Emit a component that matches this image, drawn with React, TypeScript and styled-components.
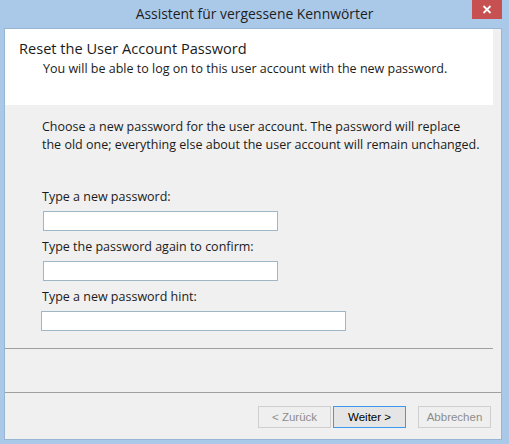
import React from 'react';
import styled, { createGlobalStyle } from 'styled-components';

const GlobalStyle = createGlobalStyle`
    html, body {
        margin: 0;
        padding: 0;
        background: #aac9e9;
    }
    * { box-sizing: border-box; }
`;

const Window = styled.div`
    width: 509px;
    height: 444px;
    background: #aac9e9;
    display: flex;
    flex-direction: column;
    font-family: "Open Sans", "Noto Sans", sans-serif;
    color: #1b1b1b;
`;

const TitleBar = styled.div`
    height: 28px;
    display: grid;
    grid-template-columns: 1fr auto 1fr;
    align-items: start;
`;

const Title = styled.div`
    grid-column: 2;
    font-size: 13.9px;
    line-height: 28px;
    color: #1e1e1e;
`;

const CloseButton = styled.div`
    grid-column: 3;
    justify-self: end;
    margin-right: 7px;
    width: 30px;
    height: 19px;
    background: #c75050;
    display: flex;
    align-items: center;
    justify-content: center;
`;

const Client = styled.div`
    margin: 0 7px 4px 4px;
    height: 412px;
    border: 1px solid #98b5d4;
    background: #f0f0f0;
    display: flex;
    flex-direction: column;
`;

const Header = styled.div`
    height: 76px;
    margin-right: 8px;
    background: #ffffff;
    padding: 9px 0 0 14px;
`;

const HeaderTitle = styled.div`
    font-size: 14.6px;
    line-height: 20px;
`;

const HeaderSub = styled.div`
    font-size: 12.5px;
    line-height: 17px;
    padding-left: 24px;
    margin-top: 2px;
`;

const Body = styled.div`
    height: 244px;
    padding: 13px 0 0 37px;
    margin-right: 8px;
    border-bottom: 1px solid #a0a0a0;
`;

const Intro = styled.p`
    margin: 0 0 34px;
    font-size: 12.5px;
    line-height: 18px;
    white-space: nowrap;
`;

const Field = styled.div`
    display: flex;
    flex-direction: column;
    margin-bottom: 7px;
`;

const Label = styled.label`
    font-size: 12.5px;
    line-height: 18px;
    margin-bottom: 5px;
`;

const Input = styled.input<{ $wide?: boolean }>`
    width: ${p => (p.$wide ? '305px' : '235px')};
    height: 20px;
    margin-left: ${p => (p.$wide ? '-1px' : '1px')};
    border: 1px solid #9fb6c6;
    background: #ffffff;
    outline: none;
    padding: 0 3px;
`;

const Spacer = styled.div`
    height: 44px;
    border-bottom: 1px solid #a0a0a0;
`;

const ButtonRow = styled.div`
    display: flex;
    justify-content: flex-end;
    padding: 13px 10px 0 0;
`;

const Button = styled.button<{ $default?: boolean; $gap?: number }>`
    width: 73px;
    height: 22px;
    margin-left: ${p => p.$gap ?? 0}px;
    font-family: "Liberation Sans", Arial, sans-serif;
    font-size: 11.5px;
    padding: 0;
    color: ${p => (p.$default ? '#000000' : '#8d8d8d')};
    background: ${p => (p.$default ? '#e5e5e5' : '#efefef')};
    border: 1px solid ${p => (p.$default ? '#3c98f0' : '#cfcfcf')};
`;

export default function App() {
    return (
        <Window>
            <GlobalStyle />
            <TitleBar>
                <Title>Assistent für vergessene Kennwörter</Title>
                <CloseButton>
                    <svg width="10" height="9" viewBox="0 0 10 9">
                        <path d="M1.5 1 L8.5 8 M8.5 1 L1.5 8" stroke="#ffffff" strokeWidth="1.8" />
                    </svg>
                </CloseButton>
            </TitleBar>
            <Client>
                <Header>
                    <HeaderTitle>Reset the User Account Password</HeaderTitle>
                    <HeaderSub>You will be able to log on to this user account with the new password.</HeaderSub>
                </Header>
                <Body>
                    <Intro>
                        Choose a new password for the user account. The password will replace
                        <br />
                        the old one; everything else about the user account will remain unchanged.
                    </Intro>
                    <Field>
                        <Label>Type a new password:</Label>
                        <Input type="password" />
                    </Field>
                    <Field>
                        <Label>Type the password again to confirm:</Label>
                        <Input type="password" />
                    </Field>
                    <Field>
                        <Label>Type a new password hint:</Label>
                        <Input $wide />
                    </Field>
                </Body>
                <Spacer />
                <ButtonRow>
                    <Button disabled>&lt; Zurück</Button>
                    <Button $default $gap={2}>Weiter &gt;</Button>
                    <Button disabled $gap={12}>Abbrechen</Button>
                </ButtonRow>
            </Client>
        </Window>
    );
}
